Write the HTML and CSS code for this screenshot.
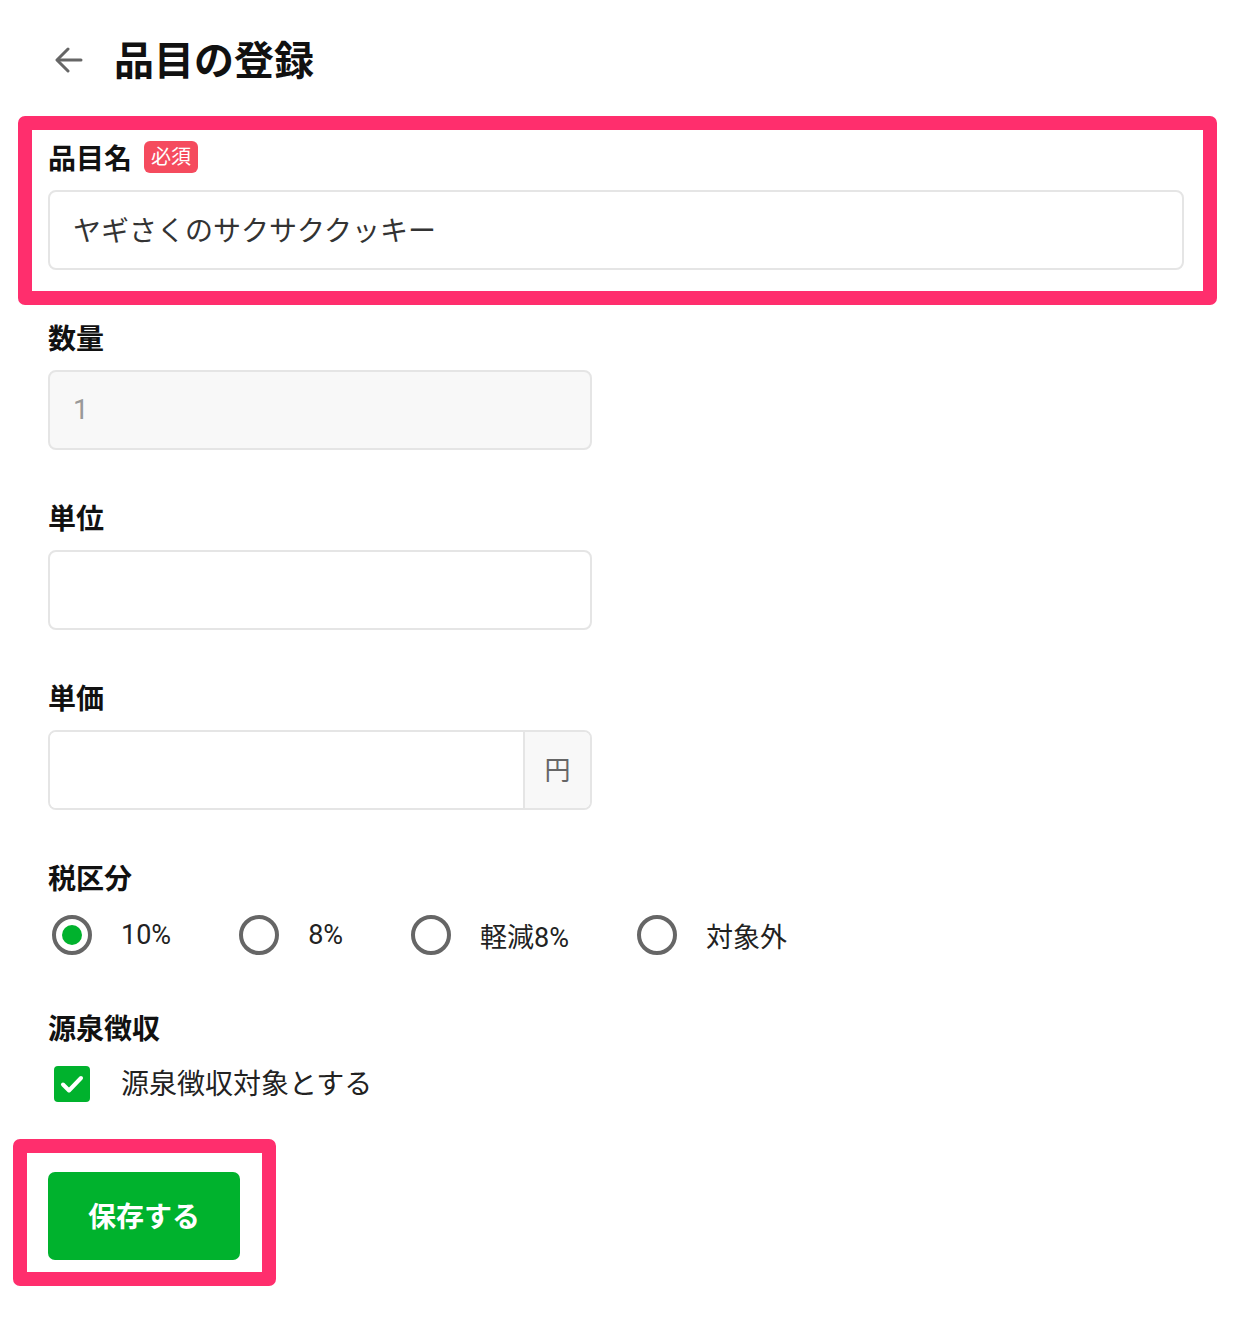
FILE: index.html
```html
<!DOCTYPE html>
<html lang="ja">
<head>
  <meta charset="UTF-8">
  <title>品目の登録</title>
  <meta name="viewport" content="width=device-width, initial-scale=1.0" />
  <link rel="stylesheet" href="styles.css">
</head>
<body>
  <div class="page">
    <header class="header">
      <svg class="back" width="28" height="28" viewBox="0 0 28 28" fill="none" stroke="#666" stroke-width="3" stroke-linecap="round" stroke-linejoin="round">
        <path d="M26 14H3"/>
        <path d="M13 3L2 14l11 11"/>
      </svg>
      <h1>品目の登録</h1>
    </header>

    <form class="form" onsubmit="return false">
      <div class="field mark-name">
        <div class="label">品目名 <span class="badge">必須</span></div>
        <input class="input wide" type="text" value="ヤギさくのサクサククッキー">
      </div>

      <div class="field">
        <div class="label">数量</div>
        <input class="input narrow" type="text" value="1" disabled>
      </div>

      <div class="field">
        <div class="label">単位</div>
        <input class="input narrow" type="text">
      </div>

      <div class="field">
        <div class="label">単価</div>
        <div class="group narrow">
          <input class="group-input" type="text">
          <span class="addon">円</span>
        </div>
      </div>

      <div class="field">
        <div class="label">税区分</div>
        <div class="radios">
          <label class="radio"><span class="dot on"></span>10%</label>
          <label class="radio"><span class="dot"></span>8%</label>
          <label class="radio"><span class="dot"></span>軽減8%</label>
          <label class="radio"><span class="dot"></span>対象外</label>
        </div>
      </div>

      <div class="field">
        <div class="label">源泉徴収</div>
        <label class="check">
          <span class="box">
            <svg width="26" height="26" viewBox="0 0 26 26" fill="none" stroke="#fff" stroke-width="4" stroke-linecap="round" stroke-linejoin="round"><path d="M4 13.5l6 6L22 7"/></svg>
          </span>
          源泉徴収対象とする
        </label>
      </div>

      <div class="actions">
        <button class="save" type="button">保存する</button>
      </div>
    </form>
  </div>
</body>
</html>
```

FILE: styles.css
```css
body { margin: 0; background: #fff; color: #111; font-family: Roboto, "Noto Sans CJK JP", sans-serif; }
.page { padding: 0 56px 80px 48px; }

.header { height: 116px; display: flex; align-items: center; }
.back { margin-left: 7px; margin-right: 31px; margin-top: 4px; }
h1 { margin: 0; font-family: "Noto Sans CJK JP", sans-serif; font-size: 40px; font-weight: 700; line-height: 1; }

.form { margin-top: 22px; display: flex; flex-direction: column; gap: 48px; }
.field { position: relative; }
.label { box-sizing: border-box; display: flex; align-items: center; height: 40px; padding-bottom: 2px; margin-bottom: 12px; font-family: "Noto Sans CJK JP", sans-serif; font-size: 28px; font-weight: 700; }
.badge { margin-left: 12px; padding: 0 7px 2px; height: 32px; line-height: 30px; box-sizing: border-box; border-radius: 6px; background: #f54b5e; color: #fff; font-size: 20px; font-weight: 400; }

.input, .group { box-sizing: border-box; height: 80px; border: 2px solid #e5e5e5; border-radius: 8px; }
.input { display: block; padding: 0 23px 2px; font: 400 28px Roboto, "Noto Sans CJK JP", sans-serif; color: #333; background: #fff; outline: none; }
.input:disabled { background: #f8f8f8; color: #999; }
.wide { width: 100%; }
.narrow { width: 544px; }

.group { display: flex; overflow: hidden; }
.group-input { flex: 1; min-width: 0; border: 0; outline: none; padding: 0 23px; font: 400 28px Roboto, "Noto Sans CJK JP", sans-serif; }
.addon { width: 65px; padding-bottom: 3px; border-left: 2px solid #e5e5e5; background: #f8f8f8; color: #666; font-family: "Noto Sans CJK JP", sans-serif; font-size: 26px; display: flex; align-items: center; justify-content: center; }

.radios { display: flex; gap: 64px; height: 50px; align-items: center; }
.radio { display: flex; align-items: center; gap: 29px; font-size: 27px; color: #222; }
.dot { box-sizing: border-box; width: 40px; height: 40px; margin-left: 4px; border: 4px solid #666; border-radius: 50%; display: flex; align-items: center; justify-content: center; }
.dot.on::after { content: ""; width: 20px; height: 20px; border-radius: 50%; background: #00b22d; }

.check { display: flex; align-items: center; gap: 31px; height: 48px; padding-bottom: 4px; box-sizing: border-box; font-size: 28px; color: #222; }
.box { width: 36px; height: 36px; margin-left: 6px; margin-top: 4px; border-radius: 4px; background: #00b22d; display: flex; align-items: center; justify-content: center; }

.actions { position: relative; align-self: flex-start; margin-top: 16px; }
.save { display: block; width: 192px; height: 88px; padding-bottom: 3px; border: 0; border-radius: 7px; background: #00b22d; color: #fff; font: 700 28px "Noto Sans CJK JP", sans-serif; cursor: pointer; }

/* annotation frames */
.mark-name::after, .actions::after { content: ""; position: absolute; border: 14px solid #ff2e6d; border-radius: 7px; pointer-events: none; }
.mark-name::after { top: -22px; left: -30px; right: -33px; bottom: -35px; }
.actions::after { top: -33px; left: -35px; right: -36px; bottom: -26px; }
```
